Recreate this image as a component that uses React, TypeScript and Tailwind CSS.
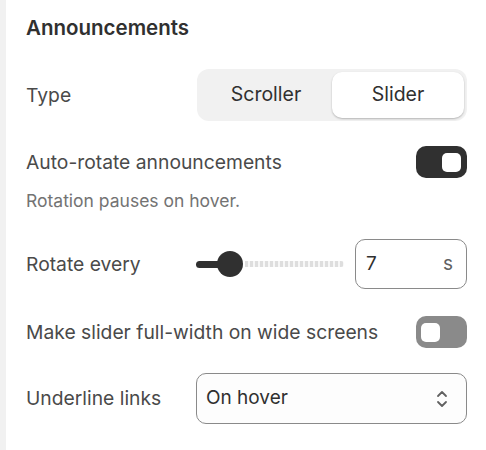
import { useState } from "react"

// Settings panel for the announcement bar section
function Toggle({ on }: { on: boolean }) {
  return (
    <div
      className={
        on
          ? "flex h-[32px] w-[51px] items-center justify-end rounded-[10px] bg-[#303030] px-[6px]"
          : "flex h-[32px] w-[51px] items-center justify-start rounded-[10px] bg-[#8a8a8a] px-[5px]"
      }
    >
      <div className="h-[19px] w-[19px] rounded-[5px] bg-white" />
    </div>
  )
}

export default function App() {
  const [type, setType] = useState("Slider")

  return (
    <div className="flex h-[450px] w-[486px] bg-white font-['Inter',sans-serif] text-[#303030]">
      <div className="w-[6px] shrink-0 bg-[#f1f1f1]" />
      <div className="flex flex-1 flex-col pl-[20px] pr-[19px] pt-[14px]">
        <h2 className="h-[28px] text-[20.5px] font-semibold leading-[28px] text-[#303030]">Announcements</h2>

        {/* Type */}
        <div className="mt-[27px] flex h-[52px] items-center justify-between">
          <span className="text-[19.3px] text-[#4a4a4a]">Type</span>
          <div className="flex h-[52px] w-[270px] rounded-[12px] bg-[#f1f1f1] p-[3px]">
            {["Scroller", "Slider"].map((t) => (
              <button
                key={t}
                onClick={() => setType(t)}
                className={
                  type === t
                    ? "flex-1 rounded-[10px] bg-white text-[19.5px] text-[#303030] shadow-[0_1px_2px_rgba(0,0,0,0.25)]"
                    : "flex-1 rounded-[10px] text-[19.5px] text-[#303030]"
                }
              >
                {t}
              </button>
            ))}
          </div>
        </div>

        {/* Auto-rotate */}
        <div className="mt-[25px] flex h-[32px] items-center justify-between">
          <span className="text-[19.3px] text-[#4a4a4a]">Auto-rotate announcements</span>
          <Toggle on />
        </div>
        <p className="mt-[13px] h-[20px] text-[17.5px] leading-[20px] text-[#737373]">Rotation pauses on hover.</p>

        {/* Rotate every */}
        <div className="mt-[28px] flex h-[50px] items-center justify-between">
          <span className="text-[19.3px] text-[#4a4a4a]">Rotate every</span>
          <div className="flex w-[271px] items-center">
            <div className="relative flex h-[26px] w-[148px] items-center">
              <div className="h-[7px] w-[33px] rounded-l-full bg-[#303030]" />
              <div className="absolute left-[21px] top-0 h-[26px] w-[26px] rounded-full bg-[#303030]" />
              <div className="ml-[16px] h-[6px] flex-1 rounded-r-full bg-[repeating-linear-gradient(90deg,#dedede_0px,#dedede_3px,#f7f7f7_3px,#f7f7f7_5px)]" />
            </div>
            <div className="ml-auto flex h-[50px] w-[112px] items-center justify-between rounded-[10px] border border-[#8a8a8a] pl-[10px] pr-[13px]">
              <span className="text-[19px] text-[#303030]">7</span>
              <span className="text-[19px] text-[#616161]">s</span>
            </div>
          </div>
        </div>

        {/* Full width */}
        <div className="mt-[27px] flex h-[32px] items-center justify-between">
          <span className="text-[19.3px] text-[#4a4a4a]">Make slider full-width on wide screens</span>
          <Toggle on={false} />
        </div>

        {/* Underline links */}
        <div className="mt-[25px] flex h-[51px] items-center justify-between">
          <span className="text-[19.3px] text-[#4a4a4a]">Underline links</span>
          <div className="flex h-[51px] w-[271px] items-center justify-between rounded-[10px] border border-[#8a8a8a] bg-[#fdfdfd] pl-[9px] pr-[18px]">
            <span className="text-[19px] text-[#303030]">On hover</span>
            <svg width="12" height="20" viewBox="0 0 12 20" fill="none" stroke="#616161" strokeWidth="1.8" strokeLinecap="round" strokeLinejoin="round">
              <path d="M2 7l4-4 4 4" />
              <path d="M2 13l4 4 4-4" />
            </svg>
          </div>
        </div>
      </div>
    </div>
  )
}
